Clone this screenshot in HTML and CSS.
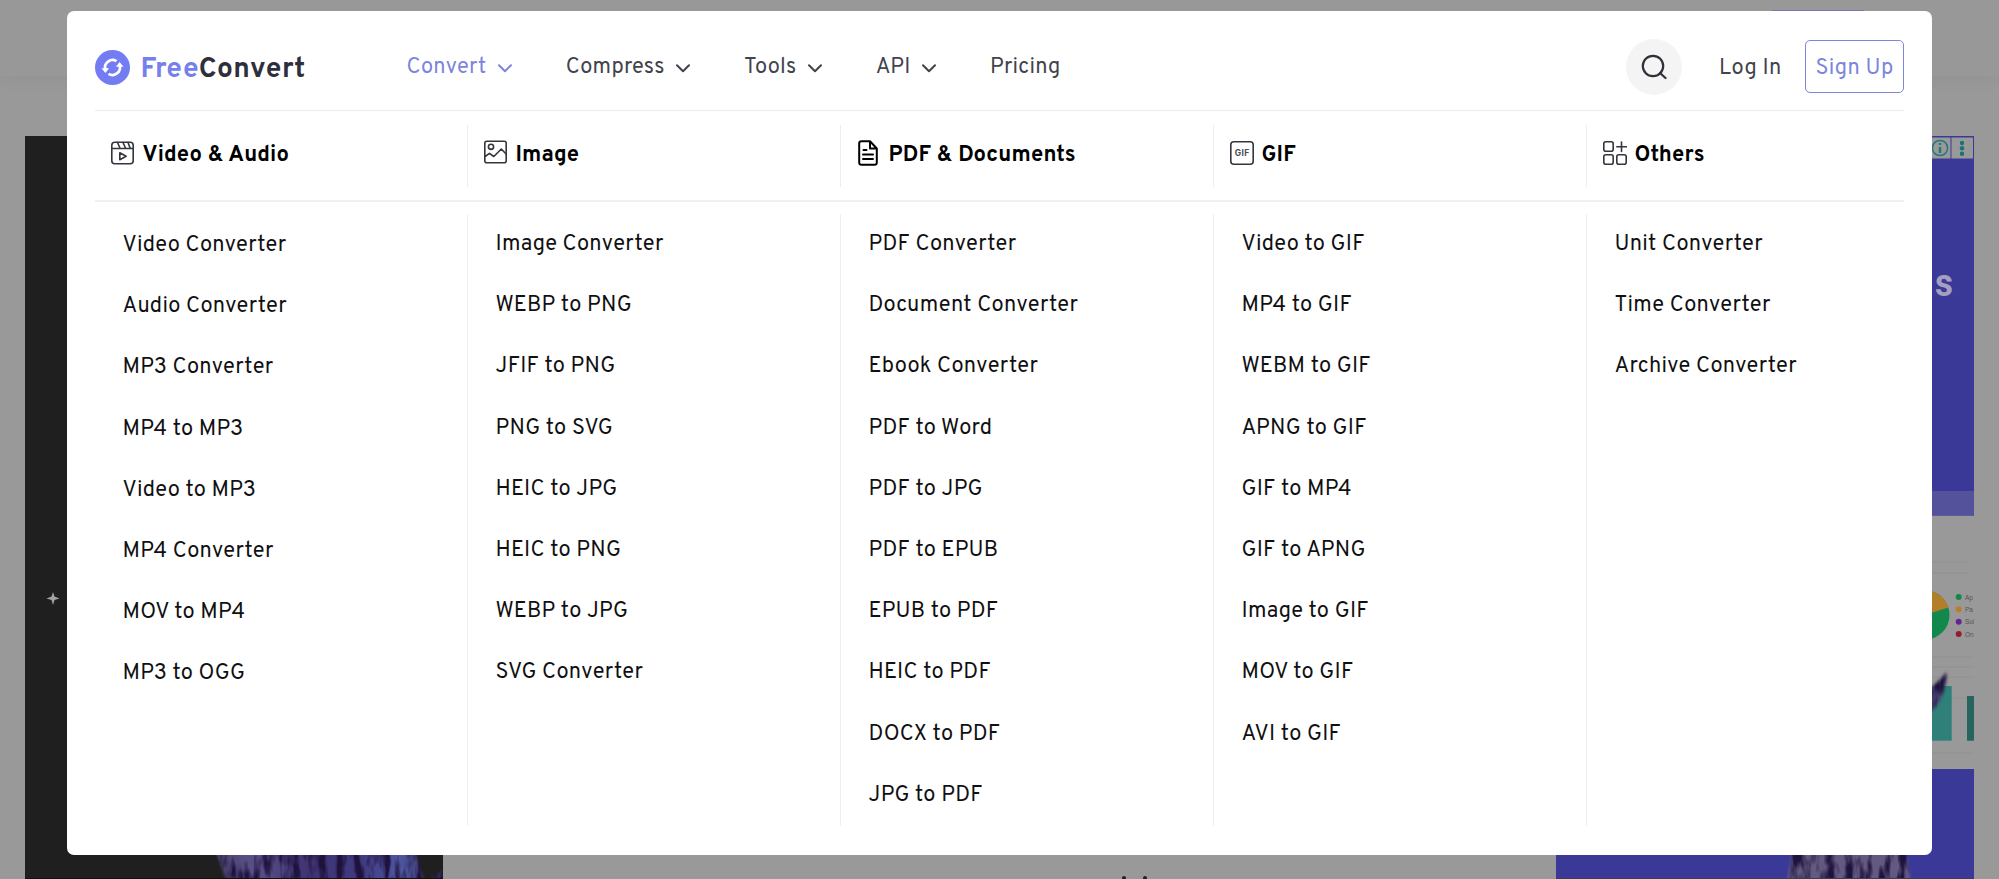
FILE: index.html
```
<!DOCTYPE html>
<html lang="en">
<head>
<meta charset="utf-8">
<title>FreeConvert</title>
<link rel="stylesheet" href="styles.css">
</head>
<body>
<div class="page">
  <div class="page-header"><span class="page-signup"></span></div>
  <div class="page-body">
    <svg class="ad-left" width="418" height="743" viewBox="25 136 418 743">
      <defs>
        <linearGradient id="furA" x1="0" x2="1"><stop offset="0" stop-color="#4a426c"/><stop offset=".2" stop-color="#5a5088"/><stop offset=".45" stop-color="#3f3472"/><stop offset=".7" stop-color="#3f3a80"/><stop offset=".88" stop-color="#4d57a0"/><stop offset="1" stop-color="#403d77"/></linearGradient>
        <filter id="fur" x="-5%" y="-20%" width="110%" height="140%" color-interpolation-filters="sRGB">
          <feTurbulence type="fractalNoise" baseFrequency=".11 .03" numOctaves="3" seed="4" result="n"/>
          <feColorMatrix in="n" values="0 0 0 0 .12  0 0 0 0 .07  0 0 0 0 .24  0 3.600 0 0 -1.500" result="dark"/>
          <feGaussianBlur in="SourceGraphic" stdDeviation="1.5" result="base"/>
          <feComposite in="dark" in2="base" operator="atop"/>
        </filter>
      </defs>
      <rect x="25" y="136" width="418" height="743" fill="#1f1f20"/>
      <path d="M53 592 L54.500 596.500 L59.500 598.500 L54.500 600 L53 605 L51.500 600 L46.500 598.500 L51.500 596.500Z" fill="#a3a3a3"/>
      <g filter="url(#fur)">
        <path d="M213 850 L219 860 L222 868 L228 885 L425 885 L420 866 L414 850Z" fill="url(#furA)"/>
        <path d="M425 885 L443 870 V885Z" fill="#4c4a82"/>
      </g>
      <rect x="25" y="878" width="418" height="1" fill="#111"/>
    </svg>
    <svg class="ad-mid" viewBox="0 0 30 3" width="30" height="3"><circle cx="5" cy="2" r="2" fill="#222"/><circle cx="26" cy="2" r="2" fill="#222"/></svg>
    <svg class="ad-right" width="418" height="743" viewBox="1556 136 418 743">
      <rect x="1556" y="136" width="418" height="379.500" fill="#3b3998"/>
      <rect x="1920" y="137.500" width="30.500" height="21" fill="#999"/>
      <rect x="1951.500" y="137.500" width="21.500" height="21" fill="#999"/>
      <circle cx="1940" cy="148" r="7.600" fill="none" stroke="#23787d" stroke-width="1.500"/>
      <path d="M1940 147v6M1940 143v2" stroke="#23787d" stroke-width="2.400"/>
      <g fill="#167479"><circle cx="1962" cy="143" r="2.200"/><circle cx="1962" cy="148.300" r="2.200"/><circle cx="1962" cy="153.700" r="2.200"/></g>
      <text class="ad-word" x="1953" y="296" text-anchor="end" textLength="18" lengthAdjust="spacingAndGlyphs">s</text>
      <rect x="1556" y="491" width="418" height="24.500" fill="#53529a"/>
      <path d="M1932 562h36M1932 573h36M1932 657h42M1932 667h42M1932 677h42M1932 698h35M1932 753h42" stroke="#909090"/>
      <circle cx="1925" cy="615" r="24.500" fill="#11884c"/>
      <path d="M1925 615 L1948.300 607.500 A24.500 24.500 0 0 0 1925 590.500Z" fill="#b47d27"/>
      <g><circle cx="1958.700" cy="597" r="3" fill="#16864c"/><circle cx="1958.700" cy="609.300" r="3" fill="#b87f2b"/><circle cx="1958.700" cy="621.700" r="3" fill="#652496"/><circle cx="1958.700" cy="634" r="3" fill="#951d2b"/></g>
      <g class="legend"><text x="1965" y="599.700">Ap</text><text x="1965" y="612">Pa</text><text x="1965" y="624.300">Sul</text><text x="1965" y="636.700">On</text></g>
      <rect x="1920" y="686" width="31.700" height="54.700" fill="#2f8078"/>
      <rect x="1967" y="696" width="7" height="44.700" fill="#27635f"/>
      <path d="M1920 695 Q1940 682 1946 672 Q1948 676 1945 686 Q1941 704 1932 711 L1920 720Z" fill="#4a4170" filter="url(#fur)"/>
      <rect x="1556" y="769" width="418" height="110" fill="#3b3998"/>
      <path d="M1793 850 L1786 885 H1911 L1906 850Z" fill="#625a80" filter="url(#fur)"/>
      <rect x="1556" y="878" width="418" height="1" fill="#3f3c55"/>
    </svg>
  </div>
</div>

<div class="menu">
  <header class="bar">
    <div class="logo">
      <svg width="35" height="35" viewBox="0 0 35 35"><circle cx="17.500" cy="17.500" r="17.500" fill="#737cf3"/><g fill="none" stroke="#fff" stroke-width="2.700"><path d="M10.300 19.500 A7.500 7.500 0 0 1 21.500 11.200"/><path d="M24.700 15.500 A7.500 7.500 0 0 1 13.500 23.800"/></g><path d="M6.500 18.300h7.600l-3.700 4.600zM28.500 16.700h-7.600l3.700-4.600z" fill="#fff"/></svg>
      <span class="brand"><span class="brand-free">Free</span>Convert</span>
    </div>
    <nav class="nav">
      <a class="active"><span>Convert</span><svg class="chev" viewBox="0 0 14 9"><path d="M1 1.200l6 6 6-6"/></svg></a>
      <a><span>Compress</span><svg class="chev" viewBox="0 0 14 9"><path d="M1 1.200l6 6 6-6"/></svg></a>
      <a><span>Tools</span><svg class="chev" viewBox="0 0 14 9"><path d="M1 1.200l6 6 6-6"/></svg></a>
      <a><span>API</span><svg class="chev" viewBox="0 0 14 9"><path d="M1 1.200l6 6 6-6"/></svg></a>
      <a><span>Pricing</span></a>
    </nav>
    <div class="account">
      <span class="search"><svg width="26" height="26" viewBox="0 0 26 26"><circle cx="12" cy="12" r="10.200"/><path d="M19 19l5.500 5"/></svg></span>
      <a class="login">Log In</a>
      <a class="signup">Sign Up</a>
    </div>
  </header>

  <div class="heads">
    <h2><svg width="23" height="24" viewBox="0 0 23 24"><rect x=".8" y="1.300" width="21.400" height="21.400" rx="3"/><path d="M1 7.500h21M6.500 1.500l2.700 6M12 1.500l2.700 6M17 1.500l2.300 6M8.800 11.800v7l6.300-3.500z"/></svg><span>Video &amp; Audio</span></h2>
    <h2 class="raised"><svg width="23" height="24" viewBox="0 0 23 24"><rect x=".8" y="1.300" width="21.400" height="21.400" rx="2"/><circle cx="7" cy="6.800" r="2.600"/><path d="M1 16.500l4.500-3.200 4.300 3.200 7.500-7.500 5 5.300"/></svg><span>Image</span></h2>
    <h2 class="doc"><svg width="20" height="26" viewBox="0 0 20 26"><path d="M12 1.200H3.500Q1.200 1.200 1.200 3.500V22.500Q1.200 24.800 3.500 24.800H16.500Q18.800 24.800 18.800 22.500V8.500ZM12 1.200V8.500H18.800M5.500 10h3M5 14.500h10M5 19h10"/></svg><span>PDF &amp; Documents</span></h2>
    <h2 class="gif"><svg width="24" height="24" viewBox="0 0 24 24"><rect x=".8" y=".8" width="22.400" height="22.400" rx="3"/><text x="12" y="15.300" text-anchor="middle" textLength="14.500">GIF</text></svg><span>GIF</span></h2>
    <h2 class="others"><svg width="24" height="24" viewBox="0 0 24 24"><rect x=".8" y=".8" width="9.400" height="9.400" rx="2"/><rect x=".8" y="13.800" width="9.400" height="9.400" rx="2"/><rect x="13.800" y="13.800" width="9.400" height="9.400" rx="2"/><path d="M18.500 1v9.500M13.800 5.700h9.700"/></svg><span>Others</span></h2>
  </div>

  <div class="lists">
    <ul class="first"><li>Video Converter</li><li>Audio Converter</li><li>MP3 Converter</li><li>MP4 to MP3</li><li>Video to MP3</li><li>MP4 Converter</li><li>MOV to MP4</li><li>MP3 to OGG</li></ul>
    <ul><li>Image Converter</li><li>WEBP to PNG</li><li>JFIF to PNG</li><li>PNG to SVG</li><li>HEIC to JPG</li><li>HEIC to PNG</li><li>WEBP to JPG</li><li>SVG Converter</li></ul>
    <ul><li>PDF Converter</li><li>Document Converter</li><li>Ebook Converter</li><li>PDF to Word</li><li>PDF to JPG</li><li>PDF to EPUB</li><li>EPUB to PDF</li><li>HEIC to PDF</li><li>DOCX to PDF</li><li>JPG to PDF</li></ul>
    <ul><li>Video to GIF</li><li>MP4 to GIF</li><li>WEBM to GIF</li><li>APNG to GIF</li><li>GIF to MP4</li><li>GIF to APNG</li><li>Image to GIF</li><li>MOV to GIF</li><li>AVI to GIF</li></ul>
    <ul><li>Unit Converter</li><li>Time Converter</li><li>Archive Converter</li></ul>
  </div>
</div>
</body>
</html>
```
FILE: styles.css
```
* { box-sizing: border-box; }
body { margin: 0; width: 1999px; height: 879px; overflow: hidden; position: relative; background: #999; font-family: Overpass, Roboto, sans-serif; }
.page { height: 879px; display: flex; flex-direction: column; }
.page-header { height: 76px; background: #989898; box-shadow: 0 2px 18px rgba(0,0,0,.06); padding: 10px 0 0 1772px; }
.page-signup { display: block; width: 92px; height: 40px; background: #7577b5; }
.page-body { flex: 1; padding: 60px 25px 0; display: flex; justify-content: space-between; align-items: flex-end; }
.page-body svg { display: block; flex: none; }
.ad-mid { margin-left: 268px; }
.ad-word { font: 700 38px Roboto, sans-serif; fill: #a3a0c0; }
.legend { font: 6.500px "Liberation Sans", sans-serif; fill: #555; }

.menu { position: absolute; left: 67px; top: 11px; width: 1865px; height: 843.5px; background: #fff; border-radius: 7px; padding: 0 28px 0 27.500px; }
.bar { height: 100px; border-bottom: 1.500px solid #ecebf3; display: flex; align-items: center; padding-top: 12px; }
.logo { display: flex; align-items: center; gap: 11px; width: 312px; }
.logo svg { position: relative; top: .5px; }
.brand { font-size: 28px; font-weight: 700; line-height: 34px; color: #2d303c; letter-spacing: .5px; padding-top: 7px; }
.brand-free { color: #7680ec; }
.nav { display: flex; gap: 54.100px; font-size: 21.800px; line-height: 28px; color: #42434c; letter-spacing: .22px; position: relative; top: 1.5px; }
.nav a { display: flex; align-items: center; gap: 11.200px; }
.nav .active { color: #7d84dc; }
.chev { width: 14px; height: 9px; margin-top: 1px; fill: none; stroke: currentColor; stroke-width: 2; stroke-linecap: round; stroke-linejoin: round; }
.account { margin-left: auto; display: flex; align-items: center; font-size: 21.800px; color: #42434c; letter-spacing: .35px; }
.search { width: 56px; height: 56px; border-radius: 50%; background: #f5f4f4; display: flex; align-items: center; justify-content: center; }
.search svg { fill: none; stroke: #2f303a; stroke-width: 2.200; stroke-linecap: round; margin-right: 1px; }
.login { margin-left: 37px; width: 86px; padding-top: 4px; }
.signup { width: 99px; height: 53px; border: 1.500px solid #7d84da; border-radius: 5px; color: #7d84dc; display: flex; align-items: center; justify-content: center; white-space: nowrap; padding-top: 4px; }

.heads, .lists { display: grid; grid-template-columns: 372px 373px 373px 373px 1fr; }
.heads { height: 91px; border-bottom: 2px solid #efeff4; padding: 14px 0 13px; }
.heads h2 { margin: 0; padding: 0 0 6px 16px; display: flex; align-items: center; gap: 9px; font-size: 22px; font-weight: 700; color: #000; letter-spacing: .13px; }
.heads h2 + h2, ul + ul { border-left: 1.500px solid #eeeef2; }
.heads h2 span { line-height: 28px; position: relative; top: 3px; }
.heads svg { fill: none; stroke: #34353e; stroke-width: 1.600; stroke-linejoin: round; stroke-linecap: round; flex: none; }
.heads .raised svg { margin-bottom: 3px; }
.heads .doc { padding-left: 17px; gap: 11px; }
.heads .doc svg { stroke: #000; stroke-width: 2; }
.heads .gif { padding-left: 16px; gap: 8px; }
.gif text { font: 700 8.500px Inter, sans-serif; fill: #4a4b55; stroke: none; letter-spacing: 0; }
.heads .others { gap: 8px; }

.lists { margin-top: 12px; height: 612px; }
ul { margin: 0; padding: 0 0 0 28px; list-style: none; font-size: 21.800px; color: #101012; letter-spacing: .26px; }
li { height: 61.200px; line-height: 61.800px; white-space: nowrap; }
ul.first { padding-top: 1px; padding-left: 28px; }
```
